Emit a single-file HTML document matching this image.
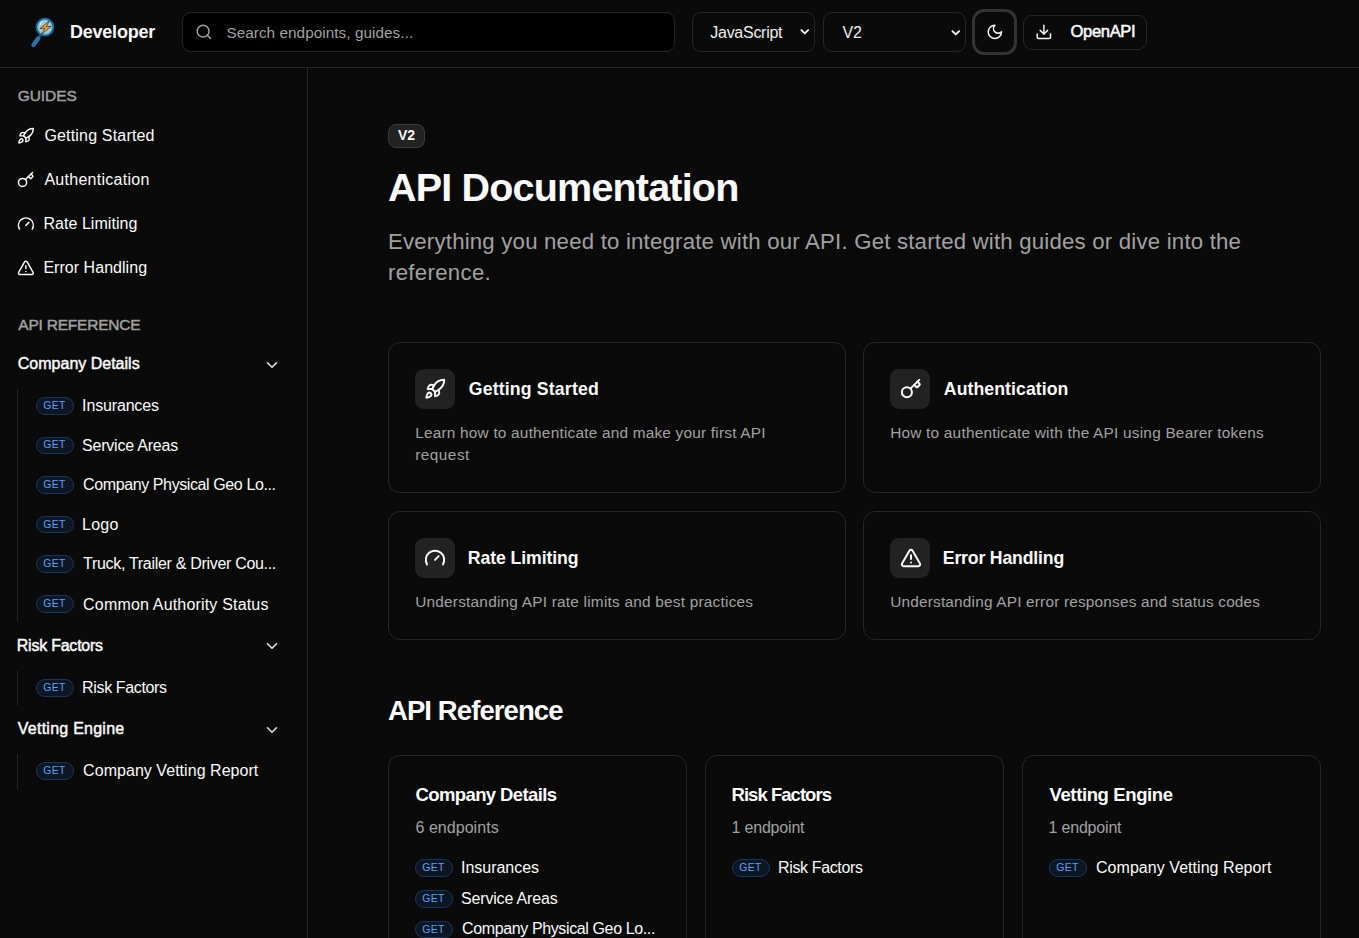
<!DOCTYPE html>
<html><head><meta charset="utf-8"><title>API Documentation</title>
<style>
html,body{margin:0;padding:0;}
body{width:1359px;height:938px;overflow:hidden;background:#0a0a0a;position:relative;font-family:"Liberation Sans", sans-serif;}
.t{position:absolute;white-space:nowrap;}
.b{position:absolute;}
.i{position:absolute;overflow:visible;}
</style></head><body>
<div class="b" style="left:0px;top:67px;width:1359px;height:1px;background:#262626"></div>
<svg class="i" style="left:28px;top:16px;width:30px;height:34px" viewBox="0 0 30 34">
<line x1="12.4" y1="19.4" x2="10.6" y2="21.6" stroke="#1a4f7a" stroke-width="2.6" stroke-linecap="round"/><line x1="10.2" y1="22.4" x2="5.4" y2="29" stroke="#2873ac" stroke-width="4.3" stroke-linecap="round"/>
<circle cx="16.95" cy="11.1" r="8.5" fill="#93cfe8" stroke="#1c5d92" stroke-width="2.0"/>
<circle cx="16.95" cy="11.1" r="7.1" fill="none" stroke="#5aa6cf" stroke-width="0.6"/>
<path d="M13.6 5.6 Q12 7 12.3 8.6" stroke="#e8f6fc" stroke-width="1" fill="none" stroke-linecap="round"/>
<path d="M21.2 4.9 L11.8 12.7 L16.8 12.2 L13.7 18.3 L23.2 10.3 L18.4 10.7 Z" fill="#f99b1e" stroke="#2a1a0a" stroke-width="0.6" stroke-linejoin="round"/>
</svg>
<div class="t" style="left:69.90px;top:23.00px;font-size:18px;line-height:18px;font-weight:700;color:#fafafa;letter-spacing:-0.200px;">Developer</div>
<div class="b" style="left:182px;top:12px;width:493px;height:40px;box-sizing:border-box;background:#000;border:1px solid #262626;border-radius:9px"></div>
<svg class="i" style="left:194.7px;top:22.8px;width:17.75px;height:17.75px;" viewBox="0 0 24 24" fill="none" stroke="#a1a1a1" stroke-width="2" stroke-linecap="round" stroke-linejoin="round"><circle cx="11" cy="11" r="8"/><path d="m21 21-4.3-4.3"/></svg>
<div class="t" style="left:226.40px;top:25.00px;font-size:15.3px;line-height:15.3px;font-weight:400;color:#a1a1a1;letter-spacing:0.054px;">Search endpoints, guides...</div>
<div class="b" style="left:692px;top:12px;width:123px;height:40px;box-sizing:border-box;background:#0a0a0a;border:1px solid #262626;border-radius:9px"></div>
<div class="t" style="left:710.30px;top:25.00px;font-size:16px;line-height:16px;font-weight:400;color:#eeeeee;letter-spacing:-0.278px;">JavaScript</div>
<svg class="i" style="left:798.1px;top:25.3px;width:13.5px;height:13.5px;" viewBox="0 0 24 24" fill="none" stroke="#f5f5f5" stroke-width="3.2" stroke-linecap="round" stroke-linejoin="round"><path d="m6 9 6 6 6-6"/></svg>
<div class="b" style="left:823px;top:12px;width:143px;height:40px;box-sizing:border-box;background:#0a0a0a;border:1px solid #262626;border-radius:9px"></div>
<div class="t" style="left:842.60px;top:25.00px;font-size:16px;line-height:16px;font-weight:400;color:#eeeeee;letter-spacing:-0.200px;">V2</div>
<svg class="i" style="left:949.1px;top:25.5px;width:13.5px;height:13.5px;" viewBox="0 0 24 24" fill="none" stroke="#f5f5f5" stroke-width="3.2" stroke-linecap="round" stroke-linejoin="round"><path d="m6 9 6 6 6-6"/></svg>
<div class="b" style="left:972px;top:9px;width:45px;height:46px;box-sizing:border-box;background:#0a0a0a;border:3px solid #333;border-radius:12px"></div>
<svg class="i" style="left:986.1px;top:22.7px;width:17.75px;height:17.75px;" viewBox="0 0 24 24" fill="none" stroke="#f5f5f5" stroke-width="2" stroke-linecap="round" stroke-linejoin="round"><path d="M12 3a6 6 0 0 0 9 9 9 9 0 1 1-9-9Z"/></svg>
<div class="b" style="left:1023px;top:15px;width:124px;height:35px;box-sizing:border-box;background:#0a0a0a;border:1px solid #262626;border-radius:9px"></div>
<svg class="i" style="left:1034.8px;top:22.6px;width:17.75px;height:17.75px;" viewBox="0 0 24 24" fill="none" stroke="#f5f5f5" stroke-width="2" stroke-linecap="round" stroke-linejoin="round"><path d="M21 15v4a2 2 0 0 1-2 2H5a2 2 0 0 1-2-2v-4"/><path d="M7 10l5 5 5-5"/><path d="M12 15V3"/></svg>
<div class="t" style="left:1070.50px;top:24.00px;font-size:16.6px;line-height:16.6px;font-weight:400;color:#fafafa;letter-spacing:-0.367px;-webkit-text-stroke:0.5px #fafafa;">OpenAPI</div>
<div class="b" style="left:307px;top:68px;width:1px;height:870px;background:#262626"></div>
<div class="t" style="left:17.70px;top:88.00px;font-size:15.5px;line-height:15.5px;font-weight:400;color:#a1a1a1;letter-spacing:-0.040px;-webkit-text-stroke:0.45px #a1a1a1;">GUIDES</div>
<svg class="i" style="left:17.3px;top:126.8px;width:17.75px;height:17.75px;" viewBox="0 0 24 24" fill="none" stroke="#fafafa" stroke-width="2" stroke-linecap="round" stroke-linejoin="round"><path d="M4.5 16.5c-1.5 1.26-2 5-2 5s3.74-.5 5-2c.71-.84.7-2.13-.09-2.91a2.18 2.18 0 0 0-2.91-.09z"/><path d="m12 15-3-3a22 22 0 0 1 2-3.95A12.88 12.88 0 0 1 22 2c0 2.72-.78 7.5-6 11a22.35 22.35 0 0 1-4 2z"/><path d="M9 12H4s.55-3.03 2-4c1.62-1.08 5 0 5 0"/><path d="M12 15v5s3.03-.55 4-2c1.08-1.62 0-5 0-5"/></svg>
<div class="t" style="left:44.40px;top:128.00px;font-size:16px;line-height:16px;font-weight:400;color:#fafafa;letter-spacing:0.179px;">Getting Started</div>
<svg class="i" style="left:17.3px;top:170.8px;width:17.75px;height:17.75px;" viewBox="0 0 24 24" fill="none" stroke="#fafafa" stroke-width="2" stroke-linecap="round" stroke-linejoin="round"><path d="m15.5 7.5 2.3 2.3a1 1 0 0 0 1.4 0l2.1-2.1a1 1 0 0 0 0-1.4L19 4"/><path d="m21 2-9.6 9.6"/><circle cx="7.5" cy="15.5" r="5.5"/></svg>
<div class="t" style="left:44.40px;top:172.00px;font-size:16px;line-height:16px;font-weight:400;color:#fafafa;letter-spacing:0.277px;">Authentication</div>
<svg class="i" style="left:17.3px;top:214.8px;width:17.75px;height:17.75px;" viewBox="0 0 24 24" fill="none" stroke="#fafafa" stroke-width="2" stroke-linecap="round" stroke-linejoin="round"><path d="m12 14 4-4"/><path d="M3.34 19a10 10 0 1 1 17.32 0"/></svg>
<div class="t" style="left:43.40px;top:216.00px;font-size:16px;line-height:16px;font-weight:400;color:#fafafa;letter-spacing:0.050px;">Rate Limiting</div>
<svg class="i" style="left:17.3px;top:258.8px;width:17.75px;height:17.75px;" viewBox="0 0 24 24" fill="none" stroke="#fafafa" stroke-width="2" stroke-linecap="round" stroke-linejoin="round"><path d="m21.73 18-8-14a2 2 0 0 0-3.48 0l-8 14A2 2 0 0 0 4 21h16a2 2 0 0 0 1.73-3"/><path d="M12 9v4"/><path d="M12 17h.01"/></svg>
<div class="t" style="left:43.40px;top:260.00px;font-size:16px;line-height:16px;font-weight:400;color:#fafafa;letter-spacing:0.038px;">Error Handling</div>
<div class="t" style="left:18.30px;top:317.00px;font-size:15.5px;line-height:15.5px;font-weight:400;color:#a1a1a1;letter-spacing:-0.217px;-webkit-text-stroke:0.45px #a1a1a1;">API REFERENCE</div>
<div class="t" style="left:17.80px;top:356.00px;font-size:16px;line-height:16px;font-weight:400;color:#fafafa;letter-spacing:0.000px;-webkit-text-stroke:0.45px #fafafa;">Company Details</div>
<svg class="i" style="left:262.8px;top:355.7px;width:18px;height:18px;" viewBox="0 0 24 24" fill="none" stroke="#e5e5e5" stroke-width="2.1" stroke-linecap="round" stroke-linejoin="round"><path d="m6 9 6 6 6-6"/></svg>
<div class="b" style="left:17px;top:389px;width:1px;height:232.29999999999995px;background:#262626"></div>
<div class="b" style="left:36px;top:397.0px;width:37.5px;height:17.5px;box-sizing:border-box;background:#0d1623;border:1px solid #1b355a;border-radius:9px"></div>
<div class="t" style="left:43.30px;top:400.00px;font-size:10.5px;line-height:10.5px;font-weight:400;color:#52a3fb;letter-spacing:0.300px;">GET</div>
<div class="t" style="left:82.10px;top:398.00px;font-size:16px;line-height:16px;font-weight:400;color:#fafafa;letter-spacing:-0.156px;">Insurances</div>
<div class="b" style="left:36px;top:436.6px;width:37.5px;height:17.5px;box-sizing:border-box;background:#0d1623;border:1px solid #1b355a;border-radius:9px"></div>
<div class="t" style="left:43.30px;top:439.00px;font-size:10.5px;line-height:10.5px;font-weight:400;color:#52a3fb;letter-spacing:0.300px;">GET</div>
<div class="t" style="left:82.10px;top:438.00px;font-size:16px;line-height:16px;font-weight:400;color:#fafafa;letter-spacing:-0.217px;">Service Areas</div>
<div class="b" style="left:36px;top:476.2px;width:37.5px;height:17.5px;box-sizing:border-box;background:#0d1623;border:1px solid #1b355a;border-radius:9px"></div>
<div class="t" style="left:43.30px;top:479.00px;font-size:10.5px;line-height:10.5px;font-weight:400;color:#52a3fb;letter-spacing:0.300px;">GET</div>
<div class="t" style="left:83.10px;top:477.00px;font-size:16px;line-height:16px;font-weight:400;color:#fafafa;letter-spacing:-0.396px;">Company Physical Geo Lo...</div>
<div class="b" style="left:36px;top:515.8px;width:37.5px;height:17.5px;box-sizing:border-box;background:#0d1623;border:1px solid #1b355a;border-radius:9px"></div>
<div class="t" style="left:43.30px;top:519.00px;font-size:10.5px;line-height:10.5px;font-weight:400;color:#52a3fb;letter-spacing:0.300px;">GET</div>
<div class="t" style="left:82.10px;top:517.00px;font-size:16px;line-height:16px;font-weight:400;color:#fafafa;letter-spacing:0.200px;">Logo</div>
<div class="b" style="left:36px;top:555.4px;width:37.5px;height:17.5px;box-sizing:border-box;background:#0d1623;border:1px solid #1b355a;border-radius:9px"></div>
<div class="t" style="left:43.30px;top:558.00px;font-size:10.5px;line-height:10.5px;font-weight:400;color:#52a3fb;letter-spacing:0.300px;">GET</div>
<div class="t" style="left:83.10px;top:556.00px;font-size:16px;line-height:16px;font-weight:400;color:#fafafa;letter-spacing:-0.307px;">Truck, Trailer &amp; Driver Cou...</div>
<div class="b" style="left:36px;top:595.0px;width:37.5px;height:17.5px;box-sizing:border-box;background:#0d1623;border:1px solid #1b355a;border-radius:9px"></div>
<div class="t" style="left:43.30px;top:598.00px;font-size:10.5px;line-height:10.5px;font-weight:400;color:#52a3fb;letter-spacing:0.300px;">GET</div>
<div class="t" style="left:83.10px;top:597.00px;font-size:16px;line-height:16px;font-weight:400;color:#fafafa;letter-spacing:0.177px;">Common Authority Status</div>
<div class="t" style="left:16.80px;top:638.00px;font-size:16px;line-height:16px;font-weight:400;color:#fafafa;letter-spacing:-0.236px;-webkit-text-stroke:0.45px #fafafa;">Risk Factors</div>
<svg class="i" style="left:262.8px;top:636.7px;width:18px;height:18px;" viewBox="0 0 24 24" fill="none" stroke="#e5e5e5" stroke-width="2.1" stroke-linecap="round" stroke-linejoin="round"><path d="m6 9 6 6 6-6"/></svg>
<div class="b" style="left:17px;top:671px;width:1px;height:34.200000000000045px;background:#262626"></div>
<div class="b" style="left:36px;top:679.0px;width:37.5px;height:17.5px;box-sizing:border-box;background:#0d1623;border:1px solid #1b355a;border-radius:9px"></div>
<div class="t" style="left:43.30px;top:682.00px;font-size:10.5px;line-height:10.5px;font-weight:400;color:#52a3fb;letter-spacing:0.300px;">GET</div>
<div class="t" style="left:82.10px;top:680.00px;font-size:16px;line-height:16px;font-weight:400;color:#fafafa;letter-spacing:-0.355px;">Risk Factors</div>
<div class="t" style="left:17.80px;top:721.00px;font-size:16px;line-height:16px;font-weight:400;color:#fafafa;letter-spacing:0.246px;-webkit-text-stroke:0.45px #fafafa;">Vetting Engine</div>
<svg class="i" style="left:262.8px;top:720.6px;width:18px;height:18px;" viewBox="0 0 24 24" fill="none" stroke="#e5e5e5" stroke-width="2.1" stroke-linecap="round" stroke-linejoin="round"><path d="m6 9 6 6 6-6"/></svg>
<div class="b" style="left:17px;top:754px;width:1px;height:34.700000000000045px;background:#262626"></div>
<div class="b" style="left:36px;top:762.0px;width:37.5px;height:17.5px;box-sizing:border-box;background:#0d1623;border:1px solid #1b355a;border-radius:9px"></div>
<div class="t" style="left:43.30px;top:765.00px;font-size:10.5px;line-height:10.5px;font-weight:400;color:#52a3fb;letter-spacing:0.300px;">GET</div>
<div class="t" style="left:83.10px;top:763.00px;font-size:16px;line-height:16px;font-weight:400;color:#fafafa;letter-spacing:0.043px;">Company Vetting Report</div>
<div class="b" style="left:388px;top:124px;width:37px;height:24px;box-sizing:border-box;background:#222;border:1px solid #3a3a3a;border-radius:8px"></div>
<div class="t" style="left:398.00px;top:128.00px;font-size:14px;line-height:14px;font-weight:700;color:#fafafa;letter-spacing:0.000px;">V2</div>
<div class="t" style="left:388.00px;top:168.00px;font-size:39.5px;line-height:39.5px;font-weight:700;color:#fafafa;letter-spacing:-0.812px;">API Documentation</div>
<div class="t" style="left:388.00px;top:231.00px;font-size:22.2px;line-height:22.2px;font-weight:400;color:#a1a1a1;letter-spacing:0.209px;">Everything you need to integrate with our API. Get started with guides or dive into the</div>
<div class="t" style="left:388.00px;top:262.00px;font-size:22.2px;line-height:22.2px;font-weight:400;color:#a1a1a1;letter-spacing:0.311px;">reference.</div>
<div class="b" style="left:388px;top:342px;width:458px;height:151px;box-sizing:border-box;border:1px solid #262626;border-radius:12px"></div>
<div class="b" style="left:415px;top:369px;width:40px;height:40px;background:#222;border-radius:9px"></div>
<svg class="i" style="left:424px;top:378px;width:22px;height:22px;" viewBox="0 0 24 24" fill="none" stroke="#fafafa" stroke-width="2.15" stroke-linecap="round" stroke-linejoin="round"><path d="M4.5 16.5c-1.5 1.26-2 5-2 5s3.74-.5 5-2c.71-.84.7-2.13-.09-2.91a2.18 2.18 0 0 0-2.91-.09z"/><path d="m12 15-3-3a22 22 0 0 1 2-3.95A12.88 12.88 0 0 1 22 2c0 2.72-.78 7.5-6 11a22.35 22.35 0 0 1-4 2z"/><path d="M9 12H4s.55-3.03 2-4c1.62-1.08 5 0 5 0"/><path d="M12 15v5s3.03-.55 4-2c1.08-1.62 0-5 0-5"/></svg>
<div class="t" style="left:468.80px;top:381.00px;font-size:17.7px;line-height:17.7px;font-weight:700;color:#fafafa;letter-spacing:0.157px;">Getting Started</div>
<div class="t" style="left:415.20px;top:425.00px;font-size:15.4px;line-height:15.4px;font-weight:400;color:#a1a1a1;letter-spacing:0.204px;">Learn how to authenticate and make your first API</div>
<div class="t" style="left:415.20px;top:447.00px;font-size:15.4px;line-height:15.4px;font-weight:400;color:#a1a1a1;letter-spacing:0.467px;">request</div>
<div class="b" style="left:863px;top:342px;width:458px;height:151px;box-sizing:border-box;border:1px solid #262626;border-radius:12px"></div>
<div class="b" style="left:890px;top:369px;width:40px;height:40px;background:#222;border-radius:9px"></div>
<svg class="i" style="left:899.7px;top:378px;width:22px;height:22px;" viewBox="0 0 24 24" fill="none" stroke="#fafafa" stroke-width="2.15" stroke-linecap="round" stroke-linejoin="round"><path d="m15.5 7.5 2.3 2.3a1 1 0 0 0 1.4 0l2.1-2.1a1 1 0 0 0 0-1.4L19 4"/><path d="m21 2-9.6 9.6"/><circle cx="7.5" cy="15.5" r="5.5"/></svg>
<div class="t" style="left:943.80px;top:381.00px;font-size:17.7px;line-height:17.7px;font-weight:700;color:#fafafa;letter-spacing:0.062px;">Authentication</div>
<div class="t" style="left:890.20px;top:425.00px;font-size:15.4px;line-height:15.4px;font-weight:400;color:#a1a1a1;letter-spacing:0.212px;">How to authenticate with the API using Bearer tokens</div>
<div class="b" style="left:388px;top:511px;width:458px;height:129px;box-sizing:border-box;border:1px solid #262626;border-radius:12px"></div>
<div class="b" style="left:415px;top:538px;width:40px;height:40px;background:#222;border-radius:9px"></div>
<svg class="i" style="left:424px;top:547px;width:22px;height:22px;" viewBox="0 0 24 24" fill="none" stroke="#fafafa" stroke-width="2.15" stroke-linecap="round" stroke-linejoin="round"><path d="m12 14 4-4"/><path d="M3.34 19a10 10 0 1 1 17.32 0"/></svg>
<div class="t" style="left:467.80px;top:550.00px;font-size:17.7px;line-height:17.7px;font-weight:700;color:#fafafa;letter-spacing:-0.100px;">Rate Limiting</div>
<div class="t" style="left:415.20px;top:594.00px;font-size:15.4px;line-height:15.4px;font-weight:400;color:#a1a1a1;letter-spacing:0.217px;">Understanding API rate limits and best practices</div>
<div class="b" style="left:863px;top:511px;width:458px;height:129px;box-sizing:border-box;border:1px solid #262626;border-radius:12px"></div>
<div class="b" style="left:890px;top:538px;width:40px;height:40px;background:#222;border-radius:9px"></div>
<svg class="i" style="left:899.7px;top:547px;width:22px;height:22px;" viewBox="0 0 24 24" fill="none" stroke="#fafafa" stroke-width="2.15" stroke-linecap="round" stroke-linejoin="round"><path d="m21.73 18-8-14a2 2 0 0 0-3.48 0l-8 14A2 2 0 0 0 4 21h16a2 2 0 0 0 1.73-3"/><path d="M12 9v4"/><path d="M12 17h.01"/></svg>
<div class="t" style="left:942.80px;top:550.00px;font-size:17.7px;line-height:17.7px;font-weight:700;color:#fafafa;letter-spacing:-0.185px;">Error Handling</div>
<div class="t" style="left:890.20px;top:594.00px;font-size:15.4px;line-height:15.4px;font-weight:400;color:#a1a1a1;letter-spacing:0.180px;">Understanding API error responses and status codes</div>
<div class="t" style="left:388.00px;top:697.00px;font-size:27.5px;line-height:27.5px;font-weight:700;color:#fafafa;letter-spacing:-0.917px;">API Reference</div>
<div class="b" style="left:388px;top:755px;width:299px;height:250px;box-sizing:border-box;border:1px solid #262626;border-radius:12px"></div>
<div class="t" style="left:415.50px;top:786.00px;font-size:18.5px;line-height:18.5px;font-weight:700;color:#fafafa;letter-spacing:-0.607px;">Company Details</div>
<div class="t" style="left:415.50px;top:820.00px;font-size:16px;line-height:16px;font-weight:400;color:#a1a1a1;letter-spacing:0.040px;">6 endpoints</div>
<div class="b" style="left:415px;top:859.25px;width:37.5px;height:17.5px;box-sizing:border-box;background:#0d1623;border:1px solid #1b355a;border-radius:9px"></div>
<div class="t" style="left:422.30px;top:862.00px;font-size:10.5px;line-height:10.5px;font-weight:400;color:#52a3fb;letter-spacing:0.300px;">GET</div>
<div class="t" style="left:461.00px;top:860.00px;font-size:16px;line-height:16px;font-weight:400;color:#fafafa;letter-spacing:-0.022px;">Insurances</div>
<div class="b" style="left:415px;top:890.05px;width:37.5px;height:17.5px;box-sizing:border-box;background:#0d1623;border:1px solid #1b355a;border-radius:9px"></div>
<div class="t" style="left:422.30px;top:893.00px;font-size:10.5px;line-height:10.5px;font-weight:400;color:#52a3fb;letter-spacing:0.300px;">GET</div>
<div class="t" style="left:461.00px;top:891.00px;font-size:16px;line-height:16px;font-weight:400;color:#fafafa;letter-spacing:-0.167px;">Service Areas</div>
<div class="b" style="left:415px;top:920.85px;width:37.5px;height:17.5px;box-sizing:border-box;background:#0d1623;border:1px solid #1b355a;border-radius:9px"></div>
<div class="t" style="left:422.30px;top:924.00px;font-size:10.5px;line-height:10.5px;font-weight:400;color:#52a3fb;letter-spacing:0.300px;">GET</div>
<div class="t" style="left:462.00px;top:921.00px;font-size:16px;line-height:16px;font-weight:400;color:#fafafa;letter-spacing:-0.376px;">Company Physical Geo Lo...</div>
<div class="b" style="left:705px;top:755px;width:299px;height:250px;box-sizing:border-box;border:1px solid #262626;border-radius:12px"></div>
<div class="t" style="left:731.50px;top:786.00px;font-size:18.5px;line-height:18.5px;font-weight:700;color:#fafafa;letter-spacing:-0.964px;">Risk Factors</div>
<div class="t" style="left:731.50px;top:820.00px;font-size:16px;line-height:16px;font-weight:400;color:#a1a1a1;letter-spacing:-0.189px;">1 endpoint</div>
<div class="b" style="left:732px;top:859.25px;width:37.5px;height:17.5px;box-sizing:border-box;background:#0d1623;border:1px solid #1b355a;border-radius:9px"></div>
<div class="t" style="left:739.30px;top:862.00px;font-size:10.5px;line-height:10.5px;font-weight:400;color:#52a3fb;letter-spacing:0.300px;">GET</div>
<div class="t" style="left:778.00px;top:860.00px;font-size:16px;line-height:16px;font-weight:400;color:#fafafa;letter-spacing:-0.364px;">Risk Factors</div>
<div class="b" style="left:1022px;top:755px;width:299px;height:250px;box-sizing:border-box;border:1px solid #262626;border-radius:12px"></div>
<div class="t" style="left:1049.50px;top:786.00px;font-size:18.5px;line-height:18.5px;font-weight:700;color:#fafafa;letter-spacing:-0.377px;">Vetting Engine</div>
<div class="t" style="left:1048.50px;top:820.00px;font-size:16px;line-height:16px;font-weight:400;color:#a1a1a1;letter-spacing:-0.189px;">1 endpoint</div>
<div class="b" style="left:1049px;top:859.25px;width:37.5px;height:17.5px;box-sizing:border-box;background:#0d1623;border:1px solid #1b355a;border-radius:9px"></div>
<div class="t" style="left:1056.30px;top:862.00px;font-size:10.5px;line-height:10.5px;font-weight:400;color:#52a3fb;letter-spacing:0.300px;">GET</div>
<div class="t" style="left:1096.00px;top:860.00px;font-size:16px;line-height:16px;font-weight:400;color:#fafafa;letter-spacing:0.048px;">Company Vetting Report</div>
</body></html>
